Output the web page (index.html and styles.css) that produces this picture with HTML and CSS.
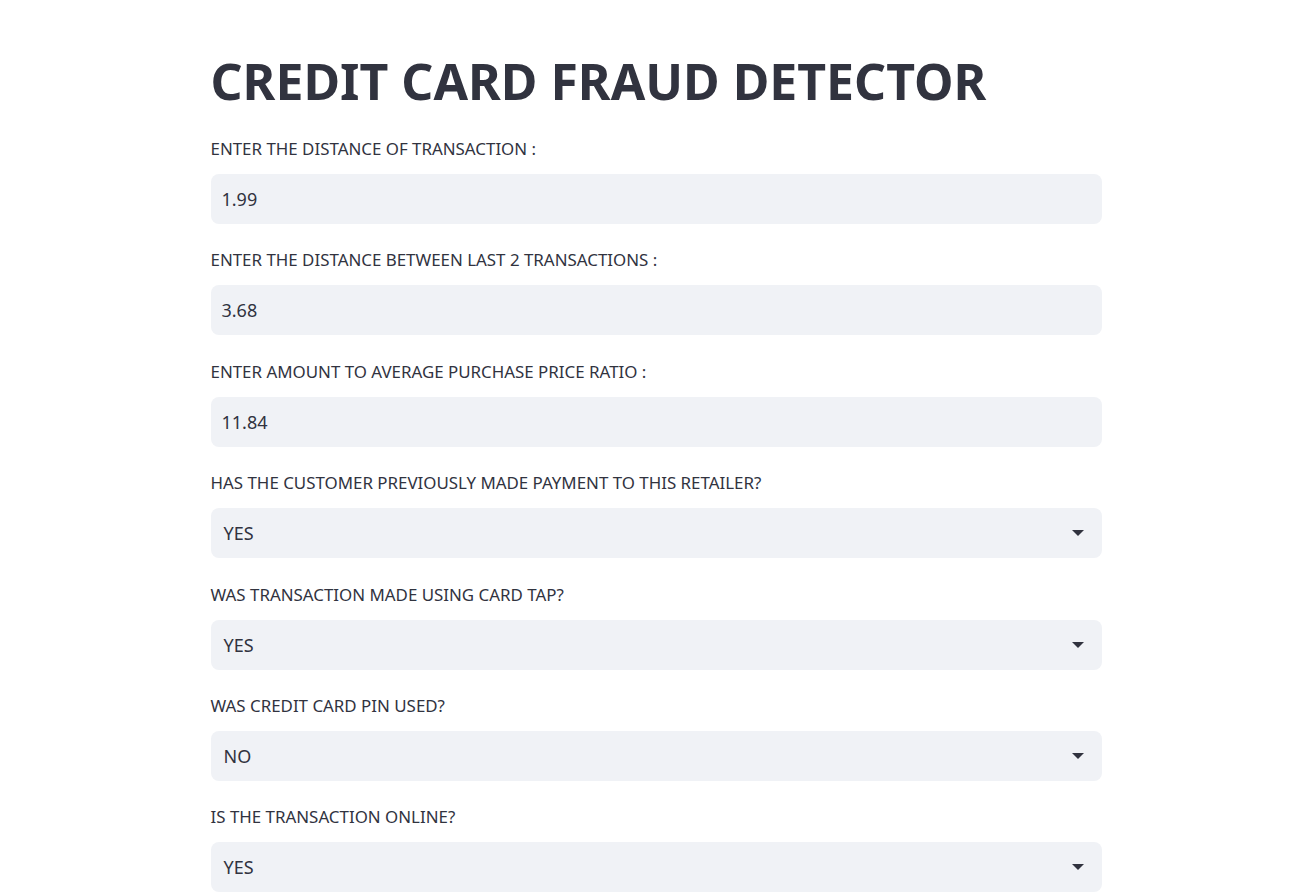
FILE: index.html
```html
<!DOCTYPE html>
<html>
<head>
<meta charset="utf-8">
<link rel="stylesheet" href="styles.css">
</head>
<body>
<main class="page">
  <h1 class="title">CREDIT CARD FRAUD DETECTOR</h1>
  <div class="form">
    <div class="field">
      <label class="label">ENTER THE DISTANCE OF TRANSACTION :</label>
      <div class="input">1.99</div>
    </div>
    <div class="field">
      <label class="label">ENTER THE DISTANCE BETWEEN LAST 2 TRANSACTIONS :</label>
      <div class="input">3.68</div>
    </div>
    <div class="field">
      <label class="label">ENTER AMOUNT TO AVERAGE PURCHASE PRICE RATIO :</label>
      <div class="input">11.84</div>
    </div>
    <div class="field">
      <label class="label">HAS THE CUSTOMER PREVIOUSLY MADE PAYMENT TO THIS RETAILER?</label>
      <div class="input select"><span class="value">YES</span><span class="arrow"></span></div>
    </div>
    <div class="field">
      <label class="label">WAS TRANSACTION MADE USING CARD TAP?</label>
      <div class="input select"><span class="value">YES</span><span class="arrow"></span></div>
    </div>
    <div class="field">
      <label class="label">WAS CREDIT CARD PIN USED?</label>
      <div class="input select"><span class="value">NO</span><span class="arrow"></span></div>
    </div>
    <div class="field">
      <label class="label">IS THE TRANSACTION ONLINE?</label>
      <div class="input select"><span class="value">YES</span><span class="arrow"></span></div>
    </div>
  </div>
</main>
</body>
</html>
```

FILE: styles.css
```css
html, body {
  margin: 0;
  padding: 0;
  background: #ffffff;
}
body {
  font-family: "Noto Sans", "Open Sans", sans-serif;
  color: #31333f;
  overflow: hidden;
}
.page {
  width: 891px;
  margin: 0 auto;
  padding: 45px 0 0 0;
  position: relative;
  left: 1px;
}
.title {
  margin: 0;
  font-size: 50px;
  line-height: 72px;
  font-weight: 700;
  letter-spacing: 0;
}
.form {
  display: flex;
  flex-direction: column;
  gap: 24.4px;
  margin-top: 20px;
}
.field {
  display: flex;
  flex-direction: column;
}
.label {
  height: 24px;
  line-height: 24px;
  font-size: 16.9px;
  margin-bottom: 13px;
  white-space: nowrap;
}
.input {
  height: 50px;
  box-sizing: border-box;
  background: #f0f2f6;
  border-radius: 8px;
  padding: 0 11px;
  display: flex;
  align-items: center;
  font-size: 18px;
}
.select {
  justify-content: space-between;
  padding-left: 13px;
  padding-right: 18px;
}
.arrow {
  width: 0;
  height: 0;
  border-left: 6px solid transparent;
  border-right: 6px solid transparent;
  border-top: 6px solid #31333f;
}
```
